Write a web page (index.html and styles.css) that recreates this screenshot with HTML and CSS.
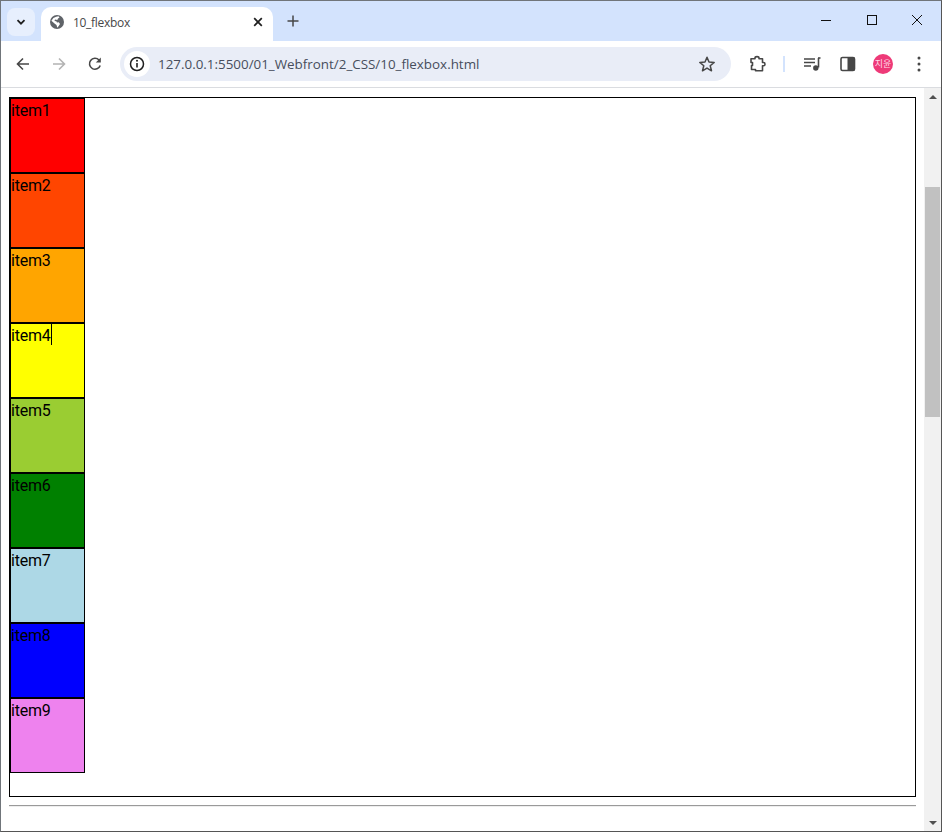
FILE: index.html
```html
<!DOCTYPE html>
<html lang="en">
<head>
    <meta charset="UTF-8">
    <meta name="viewport" content="width=device-width, initial-scale=1.0">
    <title>10_flexbox</title>
    <link rel="stylesheet" href="styles.css">
</head>
<body>
    <div class="window">
        <div class="tabstrip">
            <div class="tab-search">
                <svg width="12" height="12" viewBox="0 0 12 12"><path d="M2.5 4.2 6 7.7l3.5-3.5" fill="none" stroke="#1f1f1f" stroke-width="1.8"/></svg>
            </div>
            <div class="tab">
                <svg width="14" height="14" viewBox="0 0 14 14">
                    <circle cx="7" cy="7" r="7" fill="#5f6368"/>
                    <path d="M6.200 1.700 8.500 1.200 9.500 2.600 8 3.600 7.300 5 5 4.600 4.500 6 6.300 6.200 7 7.400 8.800 7.200 10 9 8.500 11.300 7.300 12.800 6.500 10 4.800 8.700 1.400 5.700 3.400 3Z" fill="#fff"/>
                </svg>
                <span class="tab-title">10_flexbox</span>
                <svg class="tab-close" width="10" height="10" viewBox="0 0 10 10"><path d="M1.200 1.200l7.600 7.600M8.800 1.200 1.200 8.800" stroke="#1f1f1f" stroke-width="1.700"/></svg>
            </div>
            <svg class="new-tab" width="12" height="12" viewBox="0 0 12 12"><path d="M6 .5v11M.5 6h11" stroke="#474747" stroke-width="1.500"/></svg>
            <div class="window-controls">
                <svg width="12" height="12" viewBox="0 0 12 12"><path d="M1 6.500h10" stroke="#111" stroke-width="1"/></svg>
                <svg width="12" height="12" viewBox="0 0 12 12"><rect x="1.500" y="1.500" width="9" height="9" fill="none" stroke="#111"/></svg>
                <svg class="close" width="12" height="12" viewBox="0 0 12 12"><path d="M1 1l10 10M11 1 1 11" stroke="#111" stroke-width="1"/></svg>
            </div>
        </div>

        <div class="toolbar">
            <svg class="nav-icon" width="16" height="16" viewBox="0 0 16 16"><path d="M14 8H2.500M8 2.500 2.500 8 8 13.500" fill="none" stroke="#474747" stroke-width="1.600"/></svg>
            <svg class="nav-icon" width="16" height="16" viewBox="0 0 16 16"><path d="M2 8h11.500M8 2.500 13.500 8 8 13.500" fill="none" stroke="#b3b3b3" stroke-width="1.600"/></svg>
            <svg class="nav-icon" width="16" height="16" viewBox="0 0 16 16"><path d="M13.200 9.500A5.500 5.500 0 1 1 12 4" fill="none" stroke="#474747" stroke-width="1.600"/><path d="M13.800 1.500v5h-5z" fill="#474747"/></svg>
            <div class="omnibox">
                <div class="site-info">
                    <svg width="16" height="16" viewBox="0 0 16 16"><circle cx="8" cy="8" r="6.500" fill="none" stroke="#1f1f1f" stroke-width="1.500"/><path d="M8 7v4.500" stroke="#1f1f1f" stroke-width="1.600"/><circle cx="8" cy="4.800" r="1" fill="#1f1f1f"/></svg>
                </div>
                <span class="url">127.0.0.1:5500/01_Webfront/2_CSS/10_flexbox.html</span>
                <svg class="star" width="18" height="18" viewBox="0 0 18 18"><path d="M9 2.200 11 7l5.200.4-4 3.400 1.300 5L9 13.100l-4.500 2.700 1.300-5-4-3.400L7 7z" fill="none" stroke="#474747" stroke-width="1.500" stroke-linejoin="round"/></svg>
            </div>
            <svg class="tool-icon ext" width="18" height="18" viewBox="0 0 18 18"><path d="M2 3.800H6V3C6 1.200 10 1.200 10 3V3.800H13.500V7.500H14.500C16.500 7.500 16.500 10.800 14.500 10.800H13.500V15.800H6.500V14.500H2.500V10.500H3.500V7.500H2Z" fill="none" stroke="#474747" stroke-width="1.600" stroke-linejoin="round"/></svg>
            <div class="divider"></div>
            <svg class="tool-icon media" width="18" height="16" viewBox="0 0 18 16"><path d="M1 3h11M1 6.500h11M1 10h7" stroke="#474747" stroke-width="1.600"/><path d="M15.500 2v9.500" stroke="#474747" stroke-width="1.600"/><path d="M15 2h2.500" stroke="#474747" stroke-width="1.600"/><circle cx="12.800" cy="12" r="2.700" fill="#474747"/></svg>
            <svg class="tool-icon panel" width="16" height="16" viewBox="0 0 16 16"><rect x="1" y="1.500" width="13.500" height="13" rx="1.500" fill="none" stroke="#474747" stroke-width="1.600"/><rect x="7.500" y="1.500" width="7" height="13" fill="#474747"/></svg>
            <div class="avatar">지윤</div>
            <svg class="tool-icon more" width="4" height="16" viewBox="0 0 4 16"><circle cx="2" cy="2" r="1.500" fill="#474747"/><circle cx="2" cy="8" r="1.500" fill="#474747"/><circle cx="2" cy="14" r="1.500" fill="#474747"/></svg>
        </div>

        <div class="viewport">
            <div class="page">
                <div class="container">
                    <div class="item item1">item1</div>
                    <div class="item item2">item2</div>
                    <div class="item item3">item3</div>
                    <div class="item item4">item4<span class="caret"></span></div>
                    <div class="item item5">item5</div>
                    <div class="item item6">item6</div>
                    <div class="item item7">item7</div>
                    <div class="item item8">item8</div>
                    <div class="item item9">item9</div>
                </div>
                <hr class="rule">
            </div>
            <div class="scrollbar">
                <div class="arrow arrow-up"></div>
                <div class="track"><div class="thumb"></div></div>
                <div class="arrow arrow-down"></div>
            </div>
        </div>
    </div>
</body>
</html>
```
FILE: styles.css
```css
* {
    box-sizing: border-box;
}

html, body {
    margin: 0;
    height: 100%;
    overflow: hidden;
}

body {
    font-family: Roboto, "Noto Sans CJK KR", sans-serif;
    background-color: #333;
}

.window {
    display: flex;
    flex-direction: column;
    width: 942px;
    height: 832px;
    border: 1px solid #70757a;
    border-bottom-color: #555;
    border-right-color: #555;
    background-color: white;
}

/* tab strip */
.tabstrip {
    display: flex;
    align-items: flex-start;
    height: 40px;
    padding: 6px 0 0 6px;
    background-color: #d3e3fd;
}

.tab-search {
    display: flex;
    align-items: center;
    justify-content: center;
    width: 28px;
    height: 28px;
    margin-top: 1px;
    border-radius: 8px;
    background-color: #e7effd;
}

.tab {
    display: flex;
    align-items: center;
    width: 232px;
    height: 34px;
    margin-left: 6px;
    padding: 0 10px 4px 9px;
    border-radius: 10px 10px 0 0;
    background-color: white;
}

.tab-title {
    flex: 1;
    margin-left: 9px;
    font-family: "Open Sans", sans-serif;
    font-size: 12px;
    letter-spacing: -0.3px;
    color: #474747;
}

.new-tab {
    margin: 8px 0 0 14px;
}

.window-controls {
    display: flex;
    gap: 34px;
    margin: 7px 18px 0 auto;
}

.close {
    margin-left: -1px;
}

/* toolbar */
.toolbar {
    display: flex;
    align-items: center;
    height: 47px;
    padding: 0 10px 1px 14px;
    border-radius: 10px 10px 0 0;
    border-bottom: 1px solid #dadce0;
    background-color: white;
}

.nav-icon {
    margin-right: 20px;
}

.omnibox {
    display: flex;
    align-items: center;
    width: 611px;
    height: 34px;
    margin-left: -3px;
    padding: 0 15px 0 4px;
    border-radius: 17px;
    background-color: #e9edf7;
}

.site-info {
    display: flex;
    align-items: center;
    justify-content: center;
    width: 26px;
    height: 26px;
    border-radius: 50%;
    background-color: white;
}

.url {
    flex: 1;
    margin-left: 8px;
    font-family: "Open Sans", sans-serif;
    font-size: 13.4px;
    color: #474d5c;
}

.ext {
    margin-left: 18px;
}

.divider {
    width: 2px;
    height: 16px;
    margin-left: 16px;
    background-color: #d3e3fd;
}

.media {
    margin-left: 18px;
}

.panel {
    margin-left: 19px;
}

.avatar {
    width: 20px;
    height: 20px;
    margin-left: 17px;
    border-radius: 50%;
    font-family: "Noto Sans CJK KR", sans-serif;
    font-size: 9px;
    line-height: 20px;
    text-align: center;
    color: #ffd9e6;
    background-color: #ee3a78;
}

.more {
    margin-left: 24px;
}

/* page content */
.viewport {
    display: flex;
    flex: 1;
    min-height: 0;
}

.page {
    flex: 1;
    padding: 9px 8px 0;
    overflow: hidden;
}

.container {
    display: flex;
    flex-direction: column;
    height: 700px;
    border: 1px solid black;
}

.item {
    flex: none;
    width: 75px;
    height: 75px;
    border: 1px solid black;
    font-size: 16px;
    letter-spacing: -0.2px;
    line-height: 23px;
    color: black;
}

.caret {
    display: inline-block;
    width: 1px;
    height: 21px;
    vertical-align: top;
    background-color: black;
}

.item1 { background-color: red; }
.item2 { background-color: orangered; }
.item3 { background-color: orange; }
.item4 { background-color: yellow; }
.item5 { background-color: yellowgreen; }
.item6 { background-color: green; }
.item7 { background-color: lightblue; }
.item8 { background-color: blue; }
.item9 { background-color: violet; }

.rule {
    height: 2px;
    margin: 8px 0 0;
    border: none;
    border-top: 1px solid #9a9a9a;
    border-bottom: 1px solid #eee;
}

/* scrollbar */
.scrollbar {
    display: flex;
    flex-direction: column;
    flex: none;
    width: 17px;
    background-color: #f1f1f1;
}

.arrow {
    flex: none;
    display: flex;
    align-items: center;
    justify-content: center;
    height: 17px;
}

.arrow::before {
    content: "";
    border-left: 4px solid transparent;
    border-right: 4px solid transparent;
}

.arrow-up::before {
    border-bottom: 4px solid #505050;
}

.arrow-down::before {
    border-top: 4px solid #505050;
}

.track {
    flex: 1;
    padding: 82px 1px 0;
}

.thumb {
    height: 230px;
    background-color: #c1c1c1;
}
```
